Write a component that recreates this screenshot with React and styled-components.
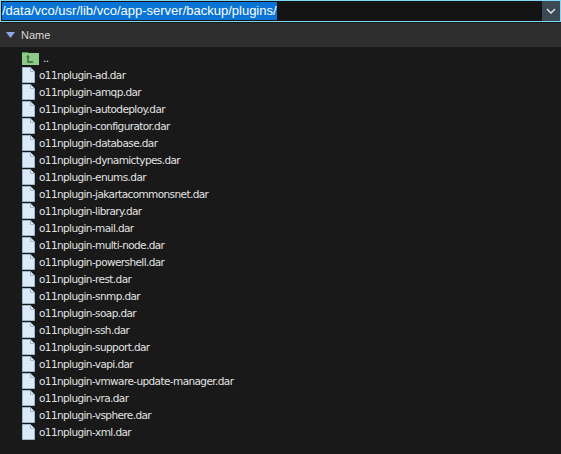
import React from 'react';
import styled, { createGlobalStyle } from 'styled-components';

const Global = createGlobalStyle`
  body { margin: 0; background: #191919; font-family: "Liberation Sans", Arial, sans-serif; }
`;

const Frame = styled.div`
  width: 561px;
  height: 454px;
  background: #191919;
  display: flex;
  flex-direction: column;
`;

const PathBar = styled.div`
  height: 22px;
  box-sizing: border-box;
  border: 1px solid #7fd6f5;
  background: #141414;
  display: flex;
  align-items: stretch;
`;

const PathText = styled.div`
  flex: 1;
  display: flex;
  align-items: center;
  padding-left: 1px;
  span {
    background: #0a74d6;
    color: #fff;
    font-size: 13px;
    line-height: 18px;
  }
`;

const Drop = styled.div`
  width: 18px;
  background: #3b4a52;
  display: flex;
  align-items: center;
  justify-content: center;
`;

const Header = styled.div`
  height: 24px;
  margin-top: 1px;
  background: #2e2e2e;
  display: flex;
  align-items: center;
  gap: 6px;
  padding-left: 6px;
  color: #d8d8d8;
  font-size: 11px;
`;

const List = styled.div`
  padding: 2px 0 0 22px;
  display: flex;
  flex-direction: column;
`;

const Row = styled.div`
  height: 17px;
  display: flex;
  align-items: center;
  gap: 4px;
  color: #e2e2e2;
  font-size: 10.5px;
  font-family: "DejaVu Sans", sans-serif;
  letter-spacing: -0.6px;
`;

const FileIcon = () => (
  <svg width="13" height="16" viewBox="0 0 13 16">
    <path d="M0.5 0.5H8.5L12.5 4.5V15.5H0.5Z" fill="#dbeaf8" stroke="#9fb8cc" />
    <path d="M8.5 0.5V4.5H12.5" fill="none" stroke="#9fb8cc" />
  </svg>
);

const UpIcon = () => (
  <svg width="17" height="14" viewBox="0 0 17 14">
    <rect x="0" y="1" width="6" height="3" fill="#3f9a3f" />
    <rect x="0" y="2" width="17" height="12" fill="#8fc98a" />
    <path d="M6 5V11H11M5 6.5L6 5L7 6.5" stroke="#2f6e2f" strokeWidth="1.4" fill="none" />
  </svg>
);

const files = ['ad', 'amqp', 'autodeploy', 'configurator', 'database', 'dynamictypes', 'enums', 'jakartacommonsnet', 'library', 'mail', 'multi-node', 'powershell', 'rest', 'snmp', 'soap', 'ssh', 'support', 'vapi', 'vmware-update-manager', 'vra', 'vsphere', 'xml'];

export default function App() {
  return (
    <Frame>
      <Global />
      <PathBar>
        <PathText><span>/data/vco/usr/lib/vco/app-server/backup/plugins/</span></PathText>
        <Drop>
          <svg width="10" height="6" viewBox="0 0 10 6"><path d="M1 1L5 5L9 1" stroke="#e0e0e0" strokeWidth="1.5" fill="none" /></svg>
        </Drop>
      </PathBar>
      <Header>
        <svg width="9" height="6" viewBox="0 0 9 6"><path d="M0 0H9L4.5 6Z" fill="#8fa8e8" /></svg>
        Name
      </Header>
      <List>
        <Row><UpIcon />..</Row>
        {files.map(f => (
          <Row key={f}><FileIcon />o11nplugin-{f}.dar</Row>
        ))}
      </List>
    </Frame>
  );
}
